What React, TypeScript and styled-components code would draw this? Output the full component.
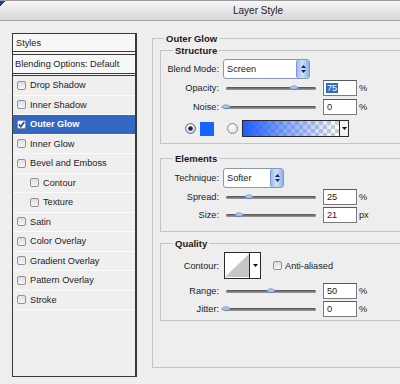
import React from "react";
import styled, { createGlobalStyle } from "styled-components";

const Global = createGlobalStyle`
  html, body { margin: 0; padding: 0; background: #eeeeee; }
  body {
    width: 400px; height: 384px; overflow: hidden;
    font-family: "Liberation Sans", Arial, sans-serif;
    font-size: 9.2px; color: #1c1c1c;
  }
  #root { width: 400px; height: 384px; }
`;

const Window = styled.div`
  width: 400px; height: 384px; overflow: hidden;
  display: flex; flex-direction: column; background: #eeeeee;
`;

const TitleBar = styled.div`
  flex: none; border-bottom: 1px solid #a6a6a6;
  background:
    linear-gradient(135deg, #1d3f9e 0 4px, transparent 4px),
    linear-gradient(#f7f7f7, #d6d6d6);
  border-top: 1px solid #9a9a9a; box-sizing: border-box; height: 21px;
  display: flex; align-items: center; padding-left: 233px;
  font-size: 10px; color: #222;
`;

const Body = styled.div`
  flex: 1; display: flex; align-items: flex-start; padding: 12px 0 0 12px;
`;

/* ---------- left list ---------- */
const List = styled.div`
  flex: none; width: 122px; height: 342px;
  border: 1px solid #3a3a3a; border-right-width: 2px;
  background: #efefef; display: flex; flex-direction: column;
`;

const HeadRow = styled.div<{ $h: number; $line: number; $pl: number }>`
  flex: none; height: ${p => p.$h}px; display: flex; align-items: center;
  padding-left: ${p => p.$pl}px; background: #f7f7f7;
  border-bottom: ${p => p.$line}px double #3a3a3a;
`;

const ItemRow = styled.div<{ $indent?: boolean; $selected?: boolean }>`
  flex: none; height: 19.5px; box-sizing: border-box;
  display: flex; align-items: center; gap: 4px;
  padding-left: ${p => (p.$indent ? 17 : 4)}px;
  border-bottom: 1px solid #fbfbfb;
  background: ${p => (p.$selected ? "#3267c2" : "transparent")};
  color: ${p => (p.$selected ? "#ffffff" : "#1c1c1c")};
  font-weight: ${p => (p.$selected ? "bold" : "normal")};
`;

const Box = styled.span<{ $checked?: boolean }>`
  flex: none; width: 9px; height: 9px; box-sizing: border-box;
  border: 1px solid #929292; border-radius: 2px;
  background: ${p => (p.$checked ? "#ffffff" : "linear-gradient(#dedede, #f6f6f6)")};
  display: flex; align-items: center; justify-content: center;
`;

/* ---------- right panel ---------- */
const Right = styled.div`
  flex: none; width: 262px; margin-left: 15px;
`;

const OuterGroup = styled.fieldset`
  margin: 0; padding: 1px 0 46px 7px; min-width: 0;
  border: 1px solid #c4c4c4; border-right: none;
`;

const Group = styled.fieldset<{ $mt: number; $pb: number }>`
  margin: ${p => p.$mt}px 0 0 0; padding: 0 0 ${p => p.$pb}px 0; min-width: 0;
  border: 1px solid #c4c4c4; border-right: none;
`;

const Legend = styled.legend<{ $ml: number }>`
  font-weight: bold; font-size: 9.5px; line-height: 11px; padding: 0 2px;
  margin-left: ${p => p.$ml}px; color: #1a1a1a;
`;

const Row = styled.div<{ $h: number; $mt: number }>`
  display: flex; align-items: center; height: ${p => p.$h}px; margin-top: ${p => p.$mt}px;
`;

const Label = styled.span<{ $gap?: number }>`
  flex: none; width: 58px; text-align: right; margin-right: ${p => p.$gap ?? 4}px;
`;

const Select = styled.div<{ $w: number }>`
  flex: none; width: ${p => p.$w}px; height: 20px; box-sizing: border-box;
  border: 1px solid #8a99b2; border-radius: 3px; background: #ffffff;
  display: flex; align-items: stretch; justify-content: space-between;
`;

const SelectText = styled.span`
  display: flex; align-items: center; padding-left: 3px;
`;

const SpinBtn = styled.span`
  flex: none; width: 12px; border-radius: 2px;
  background: linear-gradient(90deg, #9ebcf0, #cfe0fb 45%, #8fb0ea);
  border-left: 1px solid #7a9ad6;
  display: flex; flex-direction: column; align-items: center; justify-content: center; gap: 2px;
`;

const Slider = styled.div`
  position: relative; flex: none; width: 96px; height: 16px; box-sizing: border-box;
  padding: 0 3px; display: flex; align-items: center;
`;

const Track = styled.div`
  flex: 1; height: 3px; border-radius: 2px;
  background: linear-gradient(#4e4e4e, #a0a0a0);
`;

const Thumb = styled.svg`
  position: absolute; top: 50%; margin-top: -4px; margin-left: -5px;
`;

const NumBox = styled.div`
  flex: none; width: 34px; height: 16px; box-sizing: border-box; margin-left: 4px;
  border: 1px solid #7a7a7a; border-top-color: #5a5a5a; background: #ffffff;
  padding-left: 3px; display: flex; align-items: center;
`;

const Sel = styled.span`
  background: #316ac5; color: #ffffff; padding: 0 1px; margin-left: -1px;
`;

const Unit = styled.span`
  margin-left: 2px;
`;

const Radio = styled.svg<{ $ml: number }>`
  flex: none; margin-left: ${p => p.$ml}px;
`;

const Swatch = styled.span`
  flex: none; width: 14px; height: 14px; margin-left: 4px; background: #1466ff;
`;

const GradBox = styled.div`
  flex: none; width: 107px; height: 17px; margin-left: 4px; box-sizing: border-box;
  border: 1px solid #2a2a2a; display: flex;
`;

const GradFill = styled.div`
  flex: 1;
  background:
    linear-gradient(90deg, #1f5cff 0%, rgba(40, 100, 255, 0.55) 45%, rgba(60, 110, 255, 0) 100%),
    repeating-conic-gradient(#cfcfcf 0 25%, #ffffff 0 50%) 0 0 / 8px 8px;
`;

const ArrowPart = styled.div`
  flex: none; width: 8px; border-left: 1px solid #2a2a2a; background: #f3f3f3;
  display: flex; align-items: center; justify-content: center;
`;

const ContourBox = styled.div`
  flex: none; width: 37px; height: 27px; box-sizing: border-box;
  border: 1px solid #2a2a2a; background: #ffffff; display: flex;
`;

const ContourArrow = styled(ArrowPart)`
  width: 10px; background: #ffffff;
`;

const CheckLabel = styled.span`
  margin-left: 3px;
`;

const Spacer12 = styled.span`
  flex: none; width: 12px;
`;

/* ---------- drawings ---------- */
const Check = () => (
  <svg width="7" height="7" viewBox="0 0 7 7">
    <path d="M0.8 3.4 L2.8 5.5 L6.3 1" fill="none" stroke="#2452b4" strokeWidth="1.8" />
  </svg>
);

const Up = () => (
  <svg width="5" height="3" viewBox="0 0 5 3"><polygon points="2.5,0 5,3 0,3" fill="#15285a" /></svg>
);
const Down = ({ c = "#15285a" }: { c?: string }) => (
  <svg width="5" height="3" viewBox="0 0 5 3"><polygon points="0,0 5,0 2.5,3" fill={c} /></svg>
);

const RadioIcon = ({ on, ml }: { on?: boolean; ml: number }) => (
  <Radio $ml={ml} width="11" height="11" viewBox="0 0 11 11">
    <defs>
      <radialGradient id={on ? "rg1" : "rg2"} cx="0.4" cy="0.35" r="0.7">
        <stop offset="0" stopColor="#ffffff" />
        <stop offset="1" stopColor={on ? "#b9cdec" : "#dcdcdc"} />
      </radialGradient>
    </defs>
    <circle cx="5.5" cy="5.5" r="5" fill={`url(#${on ? "rg1" : "rg2"})`} stroke={on ? "#5b6f94" : "#8a8a8a"} strokeWidth="1" />
    {on && <circle cx="5.5" cy="5.5" r="2.3" fill="#1b2440" />}
  </Radio>
);

const ThumbIcon = ({ left }: { left: number }) => (
  <Thumb width="10" height="7" viewBox="0 0 10 7" style={{ left }}>
    <defs>
      <linearGradient id="tg" x1="0" y1="0" x2="0" y2="1">
        <stop offset="0" stopColor="#d6e5f8" />
        <stop offset="1" stopColor="#7ea5d9" />
      </linearGradient>
    </defs>
    <path d="M0.5 4 Q5 -0.5 9.5 4 Q5 7.5 0.5 4 Z" fill="url(#tg)" stroke="#5f84b8" strokeWidth="0.8" />
  </Thumb>
);

const SliderRow = ({ label, frac, value, unit, mt, selected }: {
  label: string; frac: number; value: string; unit: string; mt: number; selected?: boolean;
}) => (
  <Row $h={16} $mt={mt}>
    <Label>{label}</Label>
    <Slider>
      <Track />
      <ThumbIcon left={3 + frac * 90} />
    </Slider>
    <NumBox>{selected ? <Sel>{value}</Sel> : value}</NumBox>
    <Unit>{unit}</Unit>
  </Row>
);

const items: { label: string; indent?: boolean; checked?: boolean; selected?: boolean }[] = [
  { label: "Drop Shadow" },
  { label: "Inner Shadow" },
  { label: "Outer Glow", checked: true, selected: true },
  { label: "Inner Glow" },
  { label: "Bevel and Emboss" },
  { label: "Contour", indent: true },
  { label: "Texture", indent: true },
  { label: "Satin" },
  { label: "Color Overlay" },
  { label: "Gradient Overlay" },
  { label: "Pattern Overlay" },
  { label: "Stroke" },
];

export default function App() {
  return (
    <Window>
      <Global />
      <TitleBar>Layer Style</TitleBar>
      <Body>
        <List>
          <HeadRow $h={17} $line={4} $pl={3}>Styles</HeadRow>
          <HeadRow $h={18} $line={3} $pl={2}>Blending Options: Default</HeadRow>
          {items.map(it => (
            <ItemRow key={it.label} $indent={it.indent} $selected={it.selected}>
              <Box $checked={it.checked}>{it.checked && <Check />}</Box>
              <span>{it.label}</span>
            </ItemRow>
          ))}
        </List>

        <Right>
          <OuterGroup>
            <Legend $ml={4}>Outer Glow</Legend>

            <Group $mt={0} $pb={6}>
              <Legend $ml={12}>Structure</Legend>
              <Row $h={20} $mt={3}>
                <Label>Blend Mode:</Label>
                <Select $w={87}>
                  <SelectText>Screen</SelectText>
                  <SpinBtn><Up /><Down /></SpinBtn>
                </Select>
              </Row>
              <SliderRow label="Opacity:" frac={0.75} value="75" unit="%" mt={1} selected />
              <SliderRow label="Noise:" frac={0} value="0" unit="%" mt={3} />
              <Row $h={17} $mt={5}>
                <RadioIcon on ml={24} />
                <Swatch />
                <RadioIcon ml={13} />
                <GradBox>
                  <GradFill />
                  <ArrowPart><Down c="#111" /></ArrowPart>
                </GradBox>
              </Row>
            </Group>

            <Group $mt={9} $pb={8}>
              <Legend $ml={12}>Elements</Legend>
              <Row $h={20} $mt={4}>
                <Label>Technique:</Label>
                <Select $w={61}>
                  <SelectText>Softer</SelectText>
                  <SpinBtn><Up /><Down /></SpinBtn>
                </Select>
              </Row>
              <SliderRow label="Spread:" frac={0.25} value="25" unit="%" mt={1} />
              <SliderRow label="Size:" frac={0.145} value="21" unit="px" mt={2} />
            </Group>

            <Group $mt={6} $pb={3}>
              <Legend $ml={12}>Quality</Legend>
              <Row $h={27} $mt={3}>
                <Label $gap={5}>Contour:</Label>
                <ContourBox>
                  <svg width="26" height="25" viewBox="0 0 26 25">
                    <polygon points="0,25 26,0 26,25" fill="#c6c6c6" />
                  </svg>
                  <ContourArrow><Down c="#111" /></ContourArrow>
                </ContourBox>
                <Spacer12 />
                <Box />
                <CheckLabel>Anti-aliased</CheckLabel>
              </Row>
              <SliderRow label="Range:" frac={0.5} value="50" unit="%" mt={4} />
              <SliderRow label="Jitter:" frac={0} value="0" unit="%" mt={2} />
            </Group>
          </OuterGroup>
        </Right>
      </Body>
    </Window>
  );
}
